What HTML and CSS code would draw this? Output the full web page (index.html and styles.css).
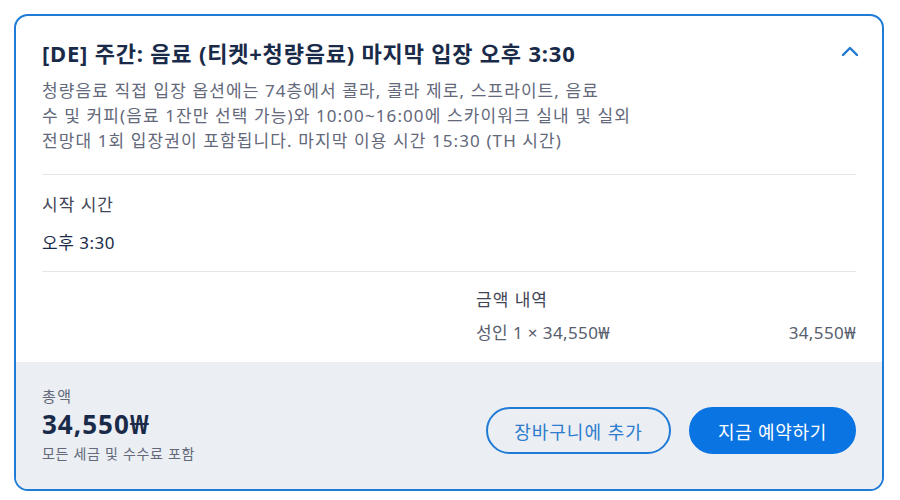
FILE: index.html
```html
<!DOCTYPE html>
<html lang="ko">
<head>
<meta charset="utf-8">
<link rel="stylesheet" href="styles.css">
</head>
<body>
<div class="card">
  <div class="body">
    <div class="head">
      <h2 class="title">[DE] 주간: 음료 (티켓+청량음료) 마지막 입장 오후 3:30</h2>
      <svg class="chev" width="18" height="12" viewBox="0 0 18 12"><path d="M2 10 L9 3 L16 10" fill="none" stroke="#1f78d1" stroke-width="2.4" stroke-linecap="round" stroke-linejoin="round"/></svg>
    </div>
    <p class="desc">청량음료 직접 입장 옵션에는 74층에서 콜라, 콜라 제로, 스프라이트, 음료<br>수 및 커피(음료 1잔만 선택 가능)와 10:00~16:00에 스카이워크 실내 및 실외<br>전망대 1회 입장권이 포함됩니다. 마지막 이용 시간 15:30 (TH 시간)</p>
    <div class="section">
      <div class="label">시작 시간</div>
      <div class="value">오후 3:30</div>
    </div>
    <div class="price">
      <div></div>
      <div class="breakdown">
        <div class="label">금액 내역</div>
        <div class="row"><span>성인 1 × 34,550₩</span><span>34,550₩</span></div>
      </div>
    </div>
  </div>
  <div class="footer">
    <div class="total">
      <div class="tlabel">총액</div>
      <div class="tamount">34,550₩</div>
      <div class="tnote">모든 세금 및 수수료 포함</div>
    </div>
    <div class="actions">
      <button class="btn outline">장바구니에 추가</button>
      <button class="btn primary">지금 예약하기</button>
    </div>
  </div>
</div>
</body>
</html>
```
FILE: styles.css
```css
* { box-sizing: border-box; }
html, body { margin: 0; padding: 0; background: #fff; }
body {
  font-family: "Noto Sans", "Noto Sans CJK KR", sans-serif;
  color: #1a2b49;
  padding: 14px 16px 0 14px;
}
.card {
  width: 870px;
  height: 477px;
  border: 2px solid #1f7bd6;
  border-radius: 14px;
  overflow: hidden;
  display: flex;
  flex-direction: column;
}
.body {
  padding: 23px 26px 0 26px;
  flex: 1;
}
.head {
  display: flex;
  justify-content: space-between;
  align-items: center;
}
.title {
  margin: 0;
  font-size: 22px;
  line-height: 28px;
  font-weight: 700;
  color: #1a2b49;
  letter-spacing: 0.8px;
}
.chev { margin-right: -3px; margin-top: -4px; }
.desc {
  margin: 11px 0 0 0;
  font-size: 17px;
  line-height: 25px;
  letter-spacing: 1.1px;
  color: #63687a;
  max-width: 640px;
  word-break: keep-all;
}
.section {
  margin-top: 21px;
  border-top: 1px solid #e4e6ea;
  border-bottom: 1px solid #e4e6ea;
  padding: 18px 0 16px;
}
.label {
  font-size: 17px;
  line-height: 24px;
  letter-spacing: 1px;
  color: #3f4555;
}
.value {
  margin-top: 14px;
  font-size: 17px;
  line-height: 24px;
  letter-spacing: 0.5px;
  color: #1a2b49;
}
.price {
  display: grid;
  grid-template-columns: 1fr 1fr;
  column-gap: 54px;
  padding: 16px 0 0;
}
.row {
  margin-top: 9px;
  display: flex;
  justify-content: space-between;
  font-size: 17px;
  line-height: 24px;
  letter-spacing: 0.4px;
  color: #585e6e;
}
.footer {
  background: #ebeef3;
  height: 127px;
  padding: 24px 26px 0 26px;
  display: flex;
  justify-content: space-between;
  align-items: flex-start;
}
.tlabel { font-size: 15px; line-height: 20px; letter-spacing: 1.5px; color: #63687a; }
.tamount { margin-top: 4px; font-size: 26px; line-height: 28px; font-weight: 700; color: #1a2b49; letter-spacing: 1px; }
.tnote { margin-top: 6px; font-size: 14px; line-height: 20px; letter-spacing: 0.7px; color: #63687a; }
.actions {
  display: flex;
  gap: 18px;
  margin-top: 21px;
}
.btn {
  font-family: inherit;
  font-size: 18px;
  height: 47px;
  border-radius: 24px;
  padding: 0;
  cursor: pointer;
}
.outline {
  background: transparent;
  border: 2px solid #1f7bd6;
  color: #2d7ccd;
  width: 185px;
  letter-spacing: 1px;
}
.primary {
  background: #0a74e3;
  border: 2px solid #0a74e3;
  color: #fff;
  width: 167px;
  letter-spacing: 0.7px;
}
```
